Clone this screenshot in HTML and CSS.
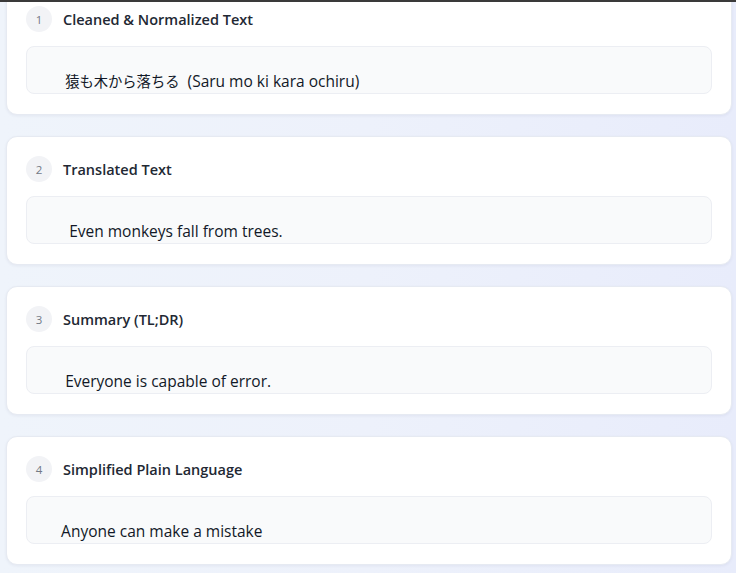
FILE: index.html
```html
<!DOCTYPE html>
<html lang="en">
<head>
<meta charset="utf-8">
<title>Results</title>
<link rel="stylesheet" href="styles.css">
</head>
<body>
<div class="topbar"></div>
<main class="stack">
  <section class="card">
    <header class="card-head"><span class="badge">1</span><h2 class="title">Cleaned &amp; Normalized Text</h2></header>
    <div class="output"><p class="output-text">     <span class="ja" lang="ja">猿も木から落ちる</span>  (Saru mo ki kara ochiru)</p></div>
  </section>
  <section class="card">
    <header class="card-head"><span class="badge">2</span><h2 class="title">Translated Text</h2></header>
    <div class="output"><p class="output-text">      Even monkeys fall from trees.</p></div>
  </section>
  <section class="card">
    <header class="card-head"><span class="badge">3</span><h2 class="title">Summary (TL;DR)</h2></header>
    <div class="output"><p class="output-text">     Everyone is capable of error.</p></div>
  </section>
  <section class="card">
    <header class="card-head"><span class="badge">4</span><h2 class="title">Simplified Plain Language</h2></header>
    <div class="output"><p class="output-text">    Anyone can make a mistake</p></div>
  </section>
</main>
</body>
</html>
```
FILE: styles.css
```css
* { box-sizing: border-box; }
html, body { height: 100%; }
body {
  margin: 0;
  overflow: hidden;
  font-family: "Open Sans", "Noto Sans CJK JP", sans-serif;
  background: linear-gradient(90deg, #eff4fb 0%, #edf1fb 50%, #e8ecfb 100%);
  color: #1f2937;
}
.topbar {
  position: fixed;
  top: 0; left: 0; right: 0;
  height: 2px;
  background: #3a3a3a;
  z-index: 2;
}
.stack {
  display: flex;
  flex-direction: column;
  gap: 21px;
  margin-top: -14px;
  padding: 0 4px 0 6px;
}
.card {
  background: #fff;
  border: 1px solid #e6eaf2;
  border-radius: 11px;
  box-shadow: 0 1px 3px rgba(30, 41, 80, 0.06);
  padding: 19px 19px 20px 19px;
}
.card-head {
  display: flex;
  align-items: center;
  gap: 11px;
  height: 26px;
  margin-bottom: 14px;
}
.badge {
  width: 26px; height: 26px;
  border-radius: 50%;
  background: #f2f3f6;
  color: #737a86;
  font-size: 11.5px;
  display: flex;
  align-items: center;
  justify-content: center;
}
.title {
  margin: 0;
  font-size: 14.5px;
  font-weight: 600;
  color: #222833;
}
.output {
  height: 48px;
  overflow: hidden;
  background: #f9fafb;
  border: 1px solid #eceef3;
  border-radius: 8px;
  padding: 22px 17px 0 18px;
}
.output-text {
  margin: 0;
  white-space: pre;
  font-size: 15.5px;
  line-height: 24px;
  color: #111827;
}
.ja {
  font-family: "Noto Sans CJK JP", sans-serif;
  font-size: 14.3px;
}
```
